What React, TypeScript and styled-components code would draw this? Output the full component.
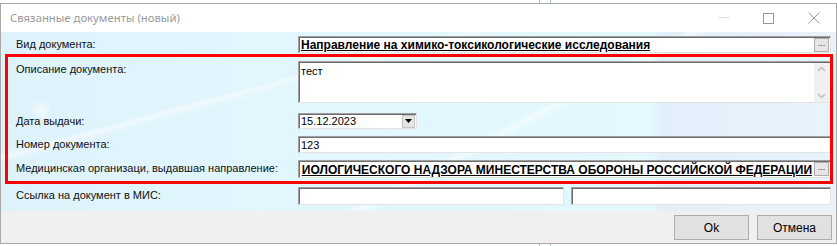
import styled, { createGlobalStyle } from 'styled-components';

const GlobalStyle = createGlobalStyle`
    html, body {
        margin: 0;
        padding: 0;
    }
    body {
        width: 837px;
        height: 246px;
        overflow: hidden;
        background-color: #ffffff;
        background-image:
            linear-gradient(90deg, transparent 539px, #b9b9b9 539px, #b9b9b9 540px, transparent 540px),
            linear-gradient(90deg, transparent 550px, #9fc3e0 550px, #9fc3e0 551px, transparent 551px);
        font-family: 'Liberation Sans', Arial, sans-serif;
    }
`;

const Dialog = styled.div`
    box-sizing: border-box;
    width: 837px;
    height: 241px;
    margin-top: 3px;
    border: 1px solid #a9a9a9;
    background: #f0f0f0;
    display: flex;
    flex-direction: column;
`;

const TitleBar = styled.div`
    height: 28px;
    flex: none;
    background: #ffffff;
    display: flex;
    align-items: center;
    padding-left: 9px;
`;

const Title = styled.div`
    flex: 1;
    font-family: 'Noto Sans', 'Open Sans', sans-serif;
    font-size: 11.3px;
    color: #9a9a9a;
    padding-bottom: 1px;
`;

const Caption = styled.div`
    width: 45px;
    height: 28px;
    display: flex;
    align-items: center;
    justify-content: center;
`;

const Content = styled.div`
    position: relative;
    height: 179px;
    flex: none;
    box-sizing: border-box;
    padding: 3px 4px 0 15px;
    background:
        linear-gradient(152deg, transparent 58%, rgba(255, 255, 255, 0.55) 59%, transparent 60.5%),
        linear-gradient(165deg, transparent 30%, rgba(255, 255, 255, 0.5) 31%, transparent 33%),
        radial-gradient(circle at 40px 78px, rgba(255, 255, 255, 0.7) 0, rgba(255, 255, 255, 0) 11px),
        linear-gradient(90deg, #def2fb 0%, #e1f6fd 35%, #e3f9fe 78%, #e2effa 79%, #e8f3fc 100%);
`;

const Row = styled.div<{ $h: number; $gap: number }>`
    display: grid;
    grid-template-columns: 282px 533px;
    height: ${({ $h }) => $h}px;
    margin-top: ${({ $gap }) => $gap}px;
`;

const Label = styled.div`
    font-size: 11px;
    line-height: 13px;
    padding-top: 2px;
    color: #111;
    white-space: nowrap;
`;

const Field = styled.div<{ $w?: number }>`
    box-sizing: border-box;
    height: 100%;
    width: ${({ $w }) => ($w ? `${$w}px` : 'auto')};
    flex: ${({ $w }) => ($w ? 'none' : '1')};
    background: #ffffff;
    border-style: solid;
    border-width: 1px;
    border-color: #a0a0a0 #e3e3e3 #e3e3e3 #a0a0a0;
    box-shadow: inset 1px 1px 0 #6d6d6d;
    display: flex;
    align-items: center;
    font-size: 11px;
    color: #000;
    padding-left: 2px;
    min-width: 0;
`;

const Memo = styled(Field)`
    align-items: flex-start;
    padding-top: 3px;
    padding-right: 1px;
`;

const Pair = styled.div`
    display: flex;
    gap: 7px;
`;

const LookupText = styled.div<{ $end?: boolean }>`
    flex: 1;
    min-width: 0;
    overflow: hidden;
    display: flex;
    justify-content: ${({ $end }) => ($end ? 'flex-end' : 'flex-start')};
    font-weight: bold;
    font-size: 12px;
    text-decoration: underline;
    white-space: nowrap;
    padding-top: 1px;
`;

const DotsButton = styled.div`
    flex: none;
    box-sizing: border-box;
    width: 15px;
    height: 14px;
    margin: 0 1px 0 2px;
    background: #e6e6e6;
    border: 1px solid #adadad;
    font-size: 9px;
    line-height: 9px;
    color: #333;
    text-align: center;
`;

const DropButton = styled.div`
    flex: none;
    box-sizing: border-box;
    width: 13px;
    height: 13px;
    margin-left: auto;
    margin-right: 1px;
    background: #e5e5e5;
    border: 1px solid #c4c4c4;
    display: flex;
    align-items: center;
    justify-content: center;
`;

const MemoText = styled.div`
    flex: 1;
`;

const ScrollBar = styled.div`
    width: 15px;
    align-self: stretch;
    margin-top: -2px;
    background: #f0f0f0;
    display: flex;
    flex-direction: column;
    justify-content: space-between;
    align-items: center;
    padding: 3px 0 3px;
`;

const Highlight = styled.div`
    position: absolute;
    left: 4px;
    top: 22px;
    width: 828px;
    height: 130px;
    box-sizing: border-box;
    border: 3px solid #ff0000;
    pointer-events: none;
`;

const Footer = styled.div`
    flex: 1;
    display: flex;
    justify-content: flex-end;
    align-items: flex-start;
    gap: 8px;
    padding: 4px 4px 0 0;
    background: #f0f0f0;
`;

const Button = styled.button`
    box-sizing: border-box;
    width: 75px;
    height: 25px;
    background: #e1e1e1;
    border: 1px solid #adadad;
    font-family: 'Liberation Sans', Arial, sans-serif;
    font-size: 12px;
    color: #000;
    padding: 0;
`;

const Chevron = ({ up }: { up?: boolean }) => (
    <svg width='9' height='6' viewBox='0 0 9 6'>
        <path d={up ? 'M1 5 L4.5 1.5 L8 5' : 'M1 1 L4.5 4.5 L8 1'} stroke='#c2c2c2' strokeWidth='1.6' fill='none' />
    </svg>
);

export default function App() {
    return (
        <>
            <GlobalStyle />
            <Dialog>
                <TitleBar>
                    <Title>Связанные документы (новый)</Title>
                    <Caption>
                        <svg width='12' height='2' viewBox='0 0 12 2'>
                            <rect x='0' y='0' width='12' height='1' fill='#e0e0e0' />
                        </svg>
                    </Caption>
                    <Caption>
                        <svg width='11' height='11' viewBox='0 0 11 11'>
                            <rect x='0.5' y='0.5' width='10' height='10' fill='none' stroke='#9a9a9a' />
                        </svg>
                    </Caption>
                    <Caption>
                        <svg width='12' height='12' viewBox='0 0 12 12'>
                            <path d='M0.5 0.5 L11.5 11.5 M11.5 0.5 L0.5 11.5' stroke='#9a9a9a' strokeWidth='1' />
                        </svg>
                    </Caption>
                </TitleBar>
                <Content>
                    <Row $h={17} $gap={1}>
                        <Label>Вид документа:</Label>
                        <Field>
                            <LookupText>Направление на химико-токсикологические исследования</LookupText>
                            <DotsButton>...</DotsButton>
                        </Field>
                    </Row>
                    <Row $h={42} $gap={8}>
                        <Label>Описание документа:</Label>
                        <Memo>
                            <MemoText>тест</MemoText>
                            <ScrollBar>
                                <Chevron up />
                                <Chevron />
                            </ScrollBar>
                        </Memo>
                    </Row>
                    <Row $h={16} $gap={10}>
                        <Label>Дата выдачи:</Label>
                        <Field $w={119}>
                            15.12.2023
                            <DropButton>
                                <svg width='7' height='4' viewBox='0 0 7 4'>
                                    <path d='M0 0 L7 0 L3.5 4 Z' fill='#000' />
                                </svg>
                            </DropButton>
                        </Field>
                    </Row>
                    <Row $h={17} $gap={7}>
                        <Label>Номер документа:</Label>
                        <Field>123</Field>
                    </Row>
                    <Row $h={18} $gap={7}>
                        <Label>Медицинская организаци, выдавшая направление:</Label>
                        <Field>
                            <LookupText $end>ИОЛОГИЧЕСКОГО НАДЗОРА МИНЕСТЕРСТВА ОБОРОНЫ РОССИЙСКОЙ ФЕДЕРАЦИИ</LookupText>
                            <DotsButton>...</DotsButton>
                        </Field>
                    </Row>
                    <Row $h={18} $gap={9}>
                        <Label>Ссылка на документ в МИС:</Label>
                        <Pair>
                            <Field $w={266} />
                            <Field />
                        </Pair>
                    </Row>
                    <Highlight />
                </Content>
                <Footer>
                    <Button>Ok</Button>
                    <Button>Отмена</Button>
                </Footer>
            </Dialog>
        </>
    );
}
